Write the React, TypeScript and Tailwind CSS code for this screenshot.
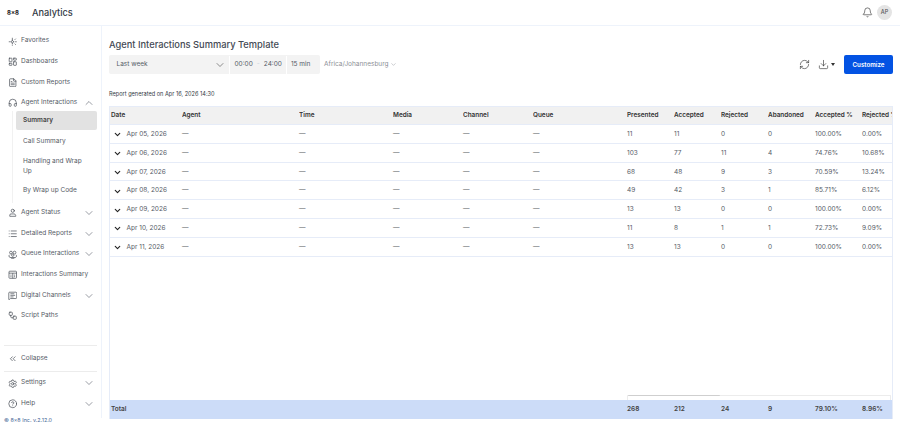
import React from 'react';
import {
  Bell,
  ChevronDown,
  ChevronUp,
  ChevronsLeft,
  CircleHelp,
  Download,
  FileText,
  Headphones,
  LayoutDashboard,
  List,
  MessageSquareText,
  RefreshCw,
  Settings,
  Workflow,
} from 'lucide-react';

type IconProps = { className?: string; strokeWidth?: number };

const FavoritesIcon = ({ className, strokeWidth }: IconProps) => (
  <svg viewBox="0 0 24 24" fill="none" stroke="currentColor" strokeWidth={strokeWidth} strokeLinecap="round" className={className}>
    <path d="M11 7c.5 3 1.500 4.500 4.500 5-3 .5-4 2-4.500 5-.5-3-1.500-4.500-4.500-5 3-.5 4-2 4.500-5z" />
    <path d="M19 5l-1.500 1.500M21 12h-2M19 19l-1.500-1.500M3 12h1M11 3v1M11 21v-1" />
  </svg>
);

const AgentIcon = ({ className, strokeWidth }: IconProps) => (
  <svg viewBox="0 0 24 24" fill="none" stroke="currentColor" strokeWidth={strokeWidth} strokeLinecap="round" className={className}>
    <circle cx="12" cy="7" r="4" />
    <path d="M7 15h10l2.500 4v2h-15v-2z" />
  </svg>
);

const QueueIcon = ({ className, strokeWidth }: IconProps) => (
  <svg viewBox="0 0 24 24" fill="none" stroke="currentColor" strokeWidth={strokeWidth} className={className}>
    <circle cx="7.500" cy="6.500" r="3.500" />
    <circle cx="16.500" cy="6.500" r="3.500" />
    <circle cx="12" cy="13" r="3" />
    <path d="M4 12c-2 1-2 6 1 7h14c3-1 3-6 1-7M8 21h8" />
  </svg>
);

const SummaryIcon = ({ className, strokeWidth }: IconProps) => (
  <svg viewBox="0 0 24 24" fill="none" stroke="currentColor" strokeWidth={strokeWidth} className={className}>
    <rect x="2.500" y="3" width="19" height="18" rx="2" />
    <path d="M2.500 8h19M12 8v13M6 13h3M15 13h3M6 17h3M15 17h3" />
  </svg>
);

const topItems = [
  { label: 'Favorites', icon: FavoritesIcon },
  { label: 'Dashboards', icon: LayoutDashboard },
  { label: 'Custom Reports', icon: FileText },
];

const lowerItems = [
  { label: 'Agent Status', icon: AgentIcon, caret: true },
  { label: 'Detailed Reports', icon: List, caret: true },
  { label: 'Queue Interactions', icon: QueueIcon, caret: true },
  { label: 'Interactions Summary', icon: SummaryIcon, caret: false },
  { label: 'Digital Channels', icon: MessageSquareText, caret: true },
  { label: 'Script Paths', icon: Workflow, caret: false },
];

const columns = ['Date', 'Agent', 'Time', 'Media', 'Channel', 'Queue', 'Presented', 'Accepted', 'Rejected', 'Abandoned', 'Accepted %', 'Rejected %'];

const rows = [
  ['Apr 05, 2026', '11', '11', '0', '0', '100.00%', '0.00%'],
  ['Apr 06, 2026', '103', '77', '11', '4', '74.76%', '10.68%'],
  ['Apr 07, 2026', '68', '48', '9', '3', '70.59%', '13.24%'],
  ['Apr 08, 2026', '49', '42', '3', '1', '85.71%', '6.12%'],
  ['Apr 09, 2026', '13', '13', '0', '0', '100.00%', '0.00%'],
  ['Apr 10, 2026', '11', '8', '1', '1', '72.73%', '9.09%'],
  ['Apr 11, 2026', '13', '13', '0', '0', '100.00%', '0.00%'],
];

const gridCols = 'grid grid-cols-[71px_117px_94px_70px_70px_94px_47px_47px_47px_47px_47px_30px]';

type NavProps = { label: string; icon: React.ElementType; caret?: boolean; open?: boolean };

const NavItem = ({ label, icon: Icon, caret, open }: NavProps) => (
  <div className="flex h-[20.6px] shrink-0 items-center pl-[7.500px] pr-[6px] text-[6.500px] text-[#555b66]">
    <Icon className="mr-[4px] h-[9.500px] w-[9.500px] shrink-0 text-[#3f444d]" strokeWidth={1.7} />
    <span className="flex-1 whitespace-nowrap">{label}</span>
    {caret && (open
      ? <ChevronUp className="h-[12px] w-[12px] shrink-0 text-[#555b66]" strokeWidth={1.2} />
      : <ChevronDown className="h-[12px] w-[12px] shrink-0 text-[#555b66]" strokeWidth={1.2} />)}
  </div>
);

export default function App() {
  return (
    <div className="flex h-[427px] w-[900px] flex-col overflow-hidden bg-white font-['Inter',sans-serif]">
      <header className="flex h-[26px] shrink-0 items-center border-b border-[#eef3fb] pl-[7px] pr-[8px]">
        <span className="w-[25px] text-[6px] font-bold text-[#222]">8x8</span>
        <span className="text-[9.200px] font-medium text-[#333a44]">Analytics</span>
        <Bell className="ml-auto h-[11px] w-[11px] text-[#333]" strokeWidth={1.4} />
        <div className="ml-[4px] flex h-[15px] w-[15px] items-center justify-center rounded-full bg-[#e4e4e4] text-[5.500px] font-medium text-[#555]">AP</div>
      </header>

      <div className="flex min-h-0 flex-1">
        <aside className="flex w-[102px] shrink-0 flex-col">
          <div className="flex h-[391.700px] shrink-0 flex-col border-r border-[#eef3fb] pt-[5px]">
            {topItems.map((item) => <NavItem key={item.label} {...item} />)}
            <NavItem label="Agent Interactions" icon={Headphones} caret open />
            <div className="ml-[12px] mt-[-2px] shrink-0 border-l border-[#f1f1f1] pl-[3px] pr-[4px] text-[6.500px] text-[#555b66]">
              <div className="flex h-[18.500px] items-center rounded-[2px] bg-[#e2e2e2] pl-[7px] font-semibold text-[#444]">Summary</div>
              <div className="flex h-[23.600px] items-center pl-[7px]">Call Summary</div>
              <div className="py-[3px] pl-[7px] leading-[10px]">Handling and Wrap<br />Up</div>
              <div className="flex h-[23.400px] items-center pl-[7px]">By Wrap up Code</div>
            </div>
            {lowerItems.map((item) => <NavItem key={item.label} {...item} />)}
            <div className="mx-[4px] mt-[19px] shrink-0 border-t border-[#ececec]" />
            <div className="h-[2px] shrink-0" />
            <NavItem label="Collapse" icon={ChevronsLeft} />
            <div className="mx-[4px] mt-[1.500px] shrink-0 border-t border-[#ececec]" />
            <div className="h-[1.500px] shrink-0" />
            <NavItem label="Settings" icon={Settings} caret />
            <NavItem label="Help" icon={CircleHelp} caret />
          </div>
          <div className="flex pl-[4px] text-[5.400px] leading-[5px] text-[#3f6595]">© 8x8 Inc. v.2.12.0</div>
        </aside>

        <main className="flex min-w-0 flex-1 flex-col pl-[7px] pr-[7px]">
          <h1 className="mt-[11px] h-[15px] text-[9.300px] font-medium leading-[15px] text-[#444a54]">Agent Interactions Summary Template</h1>
          <div className="mt-[3px] flex h-[19px] items-center">
            <div className="flex h-[19px] w-[211px] items-center rounded-[2px] bg-[#f3f3f3] pt-[1px] text-[6.500px] text-[#555b66]">
              <div className="flex h-full w-[121px] items-center border-r border-[#fff] pl-[7.500px] pr-[3px]">
                <span className="flex-1">Last week</span>
                <ChevronDown className="h-[12px] w-[12px] text-[#444]" strokeWidth={1.2} />
              </div>
              <span className="ml-[4.500px]">00:00</span>
              <span className="mx-[4px] text-[#c9d3e2]">-</span>
              <span>24:00</span>
              <span className="ml-[4px] flex h-full items-center border-l border-[#fff] pl-[4px]">15 min</span>
            </div>
            <span className="ml-[4px] text-[6.500px] text-[#8b8f96]">Africa/Johannesburg</span>
            <ChevronDown className="ml-[1px] h-[7px] w-[7px] text-[#8b8f96]" strokeWidth={1.5} />
            <div className="ml-auto flex items-center">
              <RefreshCw className="h-[11px] w-[11px] text-[#333]" strokeWidth={1.4} />
              <Download className="ml-[8px] h-[11px] w-[11px] text-[#333]" strokeWidth={1.4} />
              <span className="ml-[2px] h-0 w-0 border-x-[2px] border-t-[3px] border-x-transparent border-t-[#333]" />
              <button className="ml-[9px] h-[19px] w-[49px] rounded-[2px] bg-[#0353e3] text-[6.200px] font-semibold text-white">Customize</button>
            </div>
          </div>

          <p className="mt-[15px] h-[10px] text-[5.600px] leading-[10px] text-[#333a44]">Report generated on Apr 16, 2026 14:30</p>

          <div className="mt-[7px] flex h-[313px] flex-col overflow-hidden border-x border-t border-[#e6ecf8]">
            <div className={`${gridCols} h-[18px] shrink-0 items-center border-b border-[#e6ecf8] bg-[#f1f1f1] pl-[1px] pt-[1px] text-[6.400px] font-semibold text-[#333]`}>
              {columns.map((c) => <span key={c} className="overflow-hidden whitespace-nowrap">{c}</span>)}
            </div>
            {rows.map((r) => (
              <div key={r[0]} className={`${gridCols} h-[18.800px] shrink-0 items-center border-b border-[#e6ecf8] pl-[1px] pt-[2px] text-[6.500px] text-[#555b66]`}>
                <span className="flex items-center whitespace-nowrap">
                  <ChevronDown className="ml-[2px] mr-[4.500px] h-[9px] w-[9px] text-[#222]" strokeWidth={3} />
                  {r[0]}
                </span>
                <span>—</span>
                <span>—</span>
                <span>—</span>
                <span>—</span>
                <span>—</span>
                {r.slice(1).map((v, i) => <span key={i}>{v}</span>)}
              </div>
            ))}
            <div className="flex-1" />
            <div className="ml-[517px] mr-[1px] h-[5px] shrink-0 rounded-t-[1px] border-x border-t border-[#ececec]">
              <div className="mt-[-1px] h-[2px] w-[92px] rounded-t-[1px] border-t border-[#cfcfcf]" />
            </div>
            <div className={`${gridCols} h-[18.700px] shrink-0 items-center bg-[#ccdcf8] pl-[1px] pt-[1px] text-[6.500px] font-semibold text-[#444]`}>
              <span>Total</span>
              <span />
              <span />
              <span />
              <span />
              <span />
              <span>268</span>
              <span>212</span>
              <span>24</span>
              <span>9</span>
              <span>79.10%</span>
              <span>8.96%</span>
            </div>
          </div>
        </main>
      </div>
    </div>
  );
}
